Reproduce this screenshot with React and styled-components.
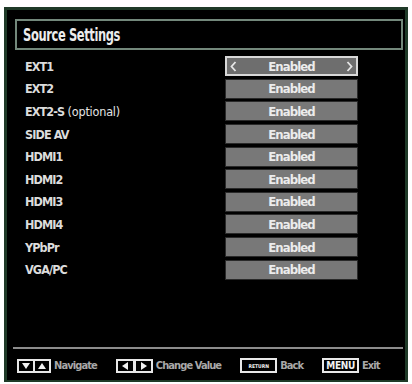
import styled, { createGlobalStyle } from "styled-components";

const GlobalStyle = createGlobalStyle`
  html, body {
    margin: 0;
    padding: 0;
    background: #fff;
  }
`;

const sources = [
    { name: "EXT1", selected: true },
    { name: "EXT2" },
    { name: "EXT2-S", note: "(optional)" },
    { name: "SIDE AV" },
    { name: "HDMI1" },
    { name: "HDMI2" },
    { name: "HDMI3" },
    { name: "HDMI4" },
    { name: "YPbPr" },
    { name: "VGA/PC" },
];

const Tri = ({ dir }) => {
    const pts = {
        down: "1,2 9,2 5,8",
        up: "1,8 9,8 5,2",
        left: "8,1 8,9 2,5",
        right: "2,1 2,9 8,5",
    };
    return (
        <svg width="10" height="10" viewBox="0 0 10 10">
            <polygon points={pts[dir]} fill="#f2f2f2" />
        </svg>
    );
};

const Chevron = ({ right }) => (
    <svg width="7" height="11" viewBox="0 0 7 11">
        <polyline
            points={right ? "1.5,1 5.5,5.5 1.5,10" : "5.5,1 1.5,5.5 5.5,10"}
            fill="none"
            stroke="#e6e6e6"
            strokeWidth="1.8"
        />
    </svg>
);

const App = () => {
    return (
        <>
            <GlobalStyle />
            <Screen>
                <TitleBar>
                    <TitleText>Source Settings</TitleText>
                </TitleBar>

                <List>
                    {sources.map((s) => (
                        <Row key={s.name}>
                            <Label>
                                {s.name}
                                {s.note && <Note> {s.note}</Note>}
                            </Label>
                            <Value selected={s.selected}>
                                {s.selected && <Chevron />}
                                <span>Enabled</span>
                                {s.selected && <Chevron right />}
                            </Value>
                        </Row>
                    ))}
                </List>

                <Footer>
                    <Hint>
                        <KeyBox>
                            <KeyCell><Tri dir="down" /></KeyCell>
                            <KeyCell><Tri dir="up" /></KeyCell>
                        </KeyBox>
                        <HintText>Navigate</HintText>
                    </Hint>
                    <Hint>
                        <KeyBox>
                            <KeyCell><Tri dir="left" /></KeyCell>
                            <KeyBar />
                            <KeyCell><Tri dir="right" /></KeyCell>
                        </KeyBox>
                        <HintText>Change Value</HintText>
                    </Hint>
                    <Hint>
                        <KeyLabel small>RETURN</KeyLabel>
                        <HintText>Back</HintText>
                    </Hint>
                    <Hint>
                        <KeyLabel>MENU</KeyLabel>
                        <HintText>Exit</HintText>
                    </Hint>
                </Footer>
            </Screen>
        </>
    );
};

export default App;

const font = `"DejaVu Sans", sans-serif`;

const Screen = styled.div`
  margin: 7px 4px 2px 4px;
  height: 375px;
  box-sizing: border-box;
  border: 3px solid #1f3a28;
  border-bottom-width: 2px;
  background: #000;
  display: flex;
  flex-direction: column;
  font-family: ${font};
  font-stretch: condensed;
`;

const TitleBar = styled.div`
  margin: 9px 2px 0 8px;
  height: 31px;
  box-sizing: border-box;
  border: 2px solid #73887b;
  padding: 0 0 0 6px;
  display: flex;
  align-items: center;
`;

const TitleText = styled.span`
  display: inline-block;
  color: #ececec;
  font-size: 17px;
  font-weight: bold;
  letter-spacing: -0.5px;
  transform: scaleX(0.75);
  transform-origin: left center;
`;

const List = styled.div`
  display: flex;
  flex-direction: column;
  padding: 5px 0 0 18px;
`;

const Row = styled.div`
  display: grid;
  grid-template-columns: 200px 133px;
  align-items: center;
  height: 22.6px;
`;

const Label = styled.div`
  color: #dcdcdc;
  font-size: 12.5px;
  font-weight: bold;
  letter-spacing: -0.9px;
`;

const Note = styled.span`
  font-weight: normal;
  letter-spacing: -0.2px;
  color: #e4e4e4;
`;

const Value = styled.div`
  height: 20px;
  box-sizing: border-box;
  border: ${(p) => (p.selected ? "2px solid #d8d8d8" : "1px solid #2a2a2a")};
  background: ${(p) => (p.selected ? "#6e6e6e" : "#787878")};
  display: flex;
  align-items: center;
  justify-content: ${(p) => (p.selected ? "space-between" : "center")};
  padding: 0 3px;
  color: #ececec;
  font-size: 13px;
  font-weight: bold;
  letter-spacing: -0.9px;
`;

const Footer = styled.div`
  margin: auto 2px 0 6px;
  border-top: 2px solid #8c8c8c;
  height: 29px;
  display: flex;
  align-items: center;
  gap: 19px;
  padding: 2px 0 0 4px;
`;

const Hint = styled.div`
  display: flex;
  align-items: center;
  gap: 3px;
`;

const HintText = styled.span`
  color: #a8a8a8;
  font-size: 11px;
  font-weight: bold;
  letter-spacing: -0.9px;
`;

const KeyBox = styled.div`
  display: flex;
  align-items: stretch;
  border: 2px solid #e8e8e8;
  height: 14px;
  box-sizing: border-box;
`;

const KeyCell = styled.div`
  width: 14px;
  display: flex;
  align-items: center;
  justify-content: center;
  & + & {
    border-left: 2px solid #e8e8e8;
  }
`;

const KeyBar = styled.div`
  width: 3px;
  background: #e8e8e8;
  margin: 0 1px;
`;

const KeyLabel = styled.div`
  border: 2px solid #e8e8e8;
  height: 15px;
  box-sizing: border-box;
  padding: 0 2px;
  display: flex;
  align-items: center;
  color: #f0f0f0;
  font-size: ${(p) => (p.small ? "5px" : "10px")};
  font-weight: bold;
  letter-spacing: ${(p) => (p.small ? "0" : "-0.3px")};
  min-width: ${(p) => (p.small ? "37px" : "auto")};
  justify-content: center;
`;
